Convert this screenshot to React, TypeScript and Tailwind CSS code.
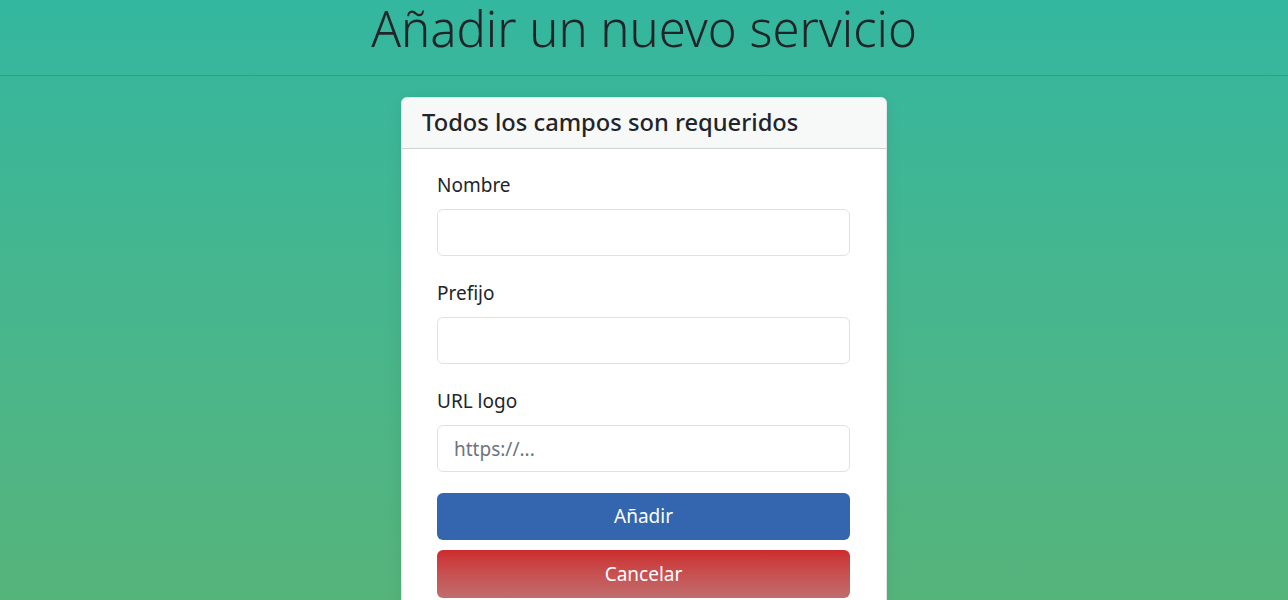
import React from "react";

function Field({ label, placeholder }: { label: string; placeholder?: string }) {
  return (
    <div className="flex flex-col">
      <label className="text-[19px] leading-[28px] text-[#212529] mb-[10px]">{label}</label>
      <input
        type="text"
        placeholder={placeholder}
        className="h-[47px] w-full rounded-[6px] border border-[#dee2e6] bg-white px-[16px] text-[19px] text-[#212529] placeholder:text-[#6c757d] outline-none"
      />
    </div>
  );
}

export default function App() {
  return (
    <div
      className="min-h-[600px] bg-gradient-to-b from-[#33b79f] to-[#56b47a] text-[#212529]"
      style={{ fontFamily: '"Noto Sans", "Open Sans", sans-serif' }}
    >
      <header className="h-[76px] border-b border-[#27a584] flex justify-center">
        <h1 className="text-[49px] leading-[56px] font-light">Añadir un nuevo servicio</h1>
      </header>

      <div className="flex justify-center pt-[21px]">
        <div className="w-[486px] rounded-[6px] border border-[#e3e6e8] bg-white shadow-[0_4px_16px_rgba(0,0,0,0.08)] overflow-hidden">
          <div className="h-[51px] bg-[#f7f8f8] border-b border-[#cfd2d4] px-[20px] flex items-center">
            <h2 className="text-[23.7px] font-medium leading-none">Todos los campos son requeridos</h2>
          </div>
          <form className="pl-[35px] pr-[36px] pt-[22px] pb-[12px] flex flex-col gap-[23px]">
            <Field label="Nombre" />
            <Field label="Prefijo" />
            <Field label="URL logo" placeholder="https://..." />
            <div className="flex flex-col gap-[10px] -mt-[2px]">
              <button
                type="button"
                className="h-[47px] rounded-[6px] bg-[#3466b0] text-white text-[19px]"
              >
                Añadir
              </button>
              <button
                type="button"
                className="h-[48px] rounded-[6px] bg-gradient-to-b from-[#cc2a2e] to-[#c06c6e] text-white text-[19px]"
              >
                Cancelar
              </button>
            </div>
          </form>
        </div>
      </div>
    </div>
  );
}
